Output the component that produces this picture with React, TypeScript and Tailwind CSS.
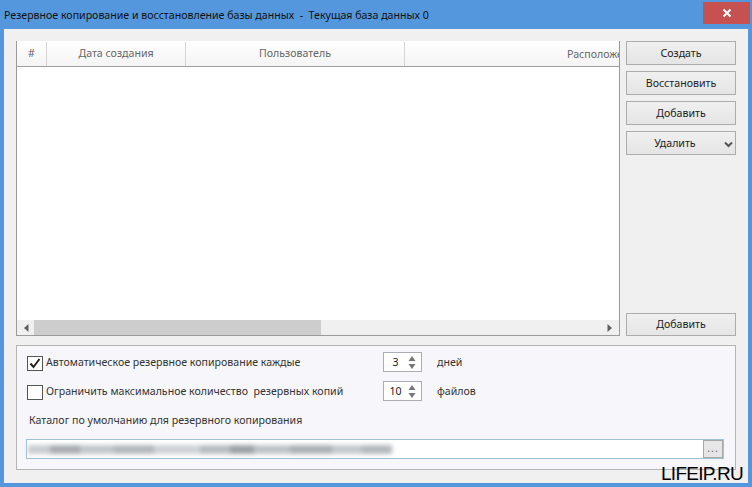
const font = { fontFamily: '"Noto Sans", sans-serif' };

function PushButton({ label, arrow, short }: { label: string; arrow?: boolean; short?: boolean }) {
  return (
    <button className={`relative w-[110px] border border-[#acacac] bg-gradient-to-b from-[#f0f0f0] to-[#e5e5e5] text-[10.6px] leading-none text-[#222] ${short ? 'h-[23px]' : 'h-[24px]'} ${arrow ? 'pr-[12px]' : ''}`}>
      {label}
      {arrow && (
        <svg className="absolute right-[2px] top-[9px]" width="9" height="7" viewBox="0 0 9 7">
          <path d="M1 1.5 L4.5 5 L8 1.5" fill="none" stroke="#555" strokeWidth="2" />
        </svg>
      )}
    </button>
  );
}

function Spinner({ value }: { value: string }) {
  return (
    <div className="flex h-[20px] w-[39px] items-center justify-between border border-[#abadb3] bg-white pl-[4px] pr-[5px] text-[10.6px] text-[#222]">
      <span className="w-[15px] text-center leading-none">{value}</span>
      <svg width="8" height="15" viewBox="0 0 8 15">
        <path d="M4 1 L7.5 6 L0.5 6 Z M0.5 9 L7.5 9 L4 14 Z" fill="#777" />
      </svg>
    </div>
  );
}

function OptionRow({ checked, label, value, unit }: { checked: boolean; label: string; value: string; unit: string }) {
  return (
    <div className="flex h-[20px] items-center">
      <div className="mt-[2px] flex h-[15px] w-[16px] items-center justify-center border border-[#555] bg-white">
        {checked && (
          <svg width="12" height="11" viewBox="0 0 12 11">
            <path d="M1.5 5.5 L4.5 9 L10.5 1" fill="none" stroke="#222" strokeWidth="2" />
          </svg>
        )}
      </div>
      <span className="ml-[3px] mt-[1px] w-[337px] whitespace-pre text-[10.6px] leading-none text-[#333]">{label}</span>
      <Spinner value={value} />
      <span className="ml-[15px] mt-[1px] text-[10.6px] leading-none text-[#333]">{unit}</span>
    </div>
  );
}

const columns = [
  { title: '#', width: 'w-[30px]' },
  { title: 'Дата создания', width: 'w-[139px]' },
  { title: 'Пользователь', width: 'w-[219px]' },
];

// smeared path text, widths and tones follow the blurred area of the screenshot
const smear = [
  { w: 'w-[22px]', bg: 'bg-[#c9ccd0]' },
  { w: 'w-[30px]', bg: 'bg-[#a9adb1]' },
  { w: 'w-[34px]', bg: 'bg-[#c4c7ca]' },
  { w: 'w-[40px]', bg: 'bg-[#b4b8bc]' },
  { w: 'w-[46px]', bg: 'bg-[#cfd2d5]' },
  { w: 'w-[30px]', bg: 'bg-[#b9bcc0]' },
  { w: 'w-[24px]', bg: 'bg-[#9ea2a6]' },
  { w: 'w-[36px]', bg: 'bg-[#c0c3c6]' },
  { w: 'w-[42px]', bg: 'bg-[#adb1b5]' },
  { w: 'w-[30px]', bg: 'bg-[#c6c9cc]' },
  { w: 'w-[30px]', bg: 'bg-[#b6b9bc]' },
];

export default function App() {
  return (
    <div className="relative flex h-[487px] w-[752px] flex-col overflow-hidden bg-[#5597dd] px-[4px] pb-[4px]" style={font}>
      <div className="flex h-[29px] shrink-0 items-start justify-between">
        <span className="mt-[9px] text-[10.6px] leading-[13px] whitespace-pre text-[#111]">
          Резервное копирование и восстановление базы данных  -  Текущая база данных 0
        </span>
        <div className="mr-[-2px] mt-[2px] flex h-[22px] w-[47px] items-center justify-center bg-[#c75050]">
          <svg width="10" height="10" viewBox="0 0 10 10">
            <path d="M1.5 1.5 L8.5 8.5 M8.5 1.5 L1.5 8.5" stroke="white" strokeWidth="2" />
          </svg>
        </div>
      </div>

      <div className="flex min-h-0 flex-1 flex-col bg-[#f0f0f0] pl-[12px] pr-[12px] pt-[12px]">
        <div className="flex h-[295px] shrink-0">
          <div className="flex w-[604px] flex-col border-b border-l border-r border-[#9a9a9a] bg-white">
            <div className="flex h-[26px] shrink-0 overflow-hidden border-b border-[#a0a0a0] bg-gradient-to-b from-white to-[#f4f4f4] pt-px text-[10.6px] text-[#666]">
              {columns.map((c) => (
                <div key={c.title} className={`flex shrink-0 items-center justify-center border-r border-[#d5d5d5] ${c.width}`}>
                  {c.title}
                </div>
              ))}
              <div className="flex-1 whitespace-nowrap pl-[162px] pt-[5px] leading-[15px]">Расположение</div>
            </div>
            <div className="flex-1" />
            <div className="flex h-[15px] shrink-0 items-center bg-[#f0f0f0]">
              <svg className="ml-[7px]" width="5" height="8" viewBox="0 0 5 8">
                <path d="M4.5 0 L4.5 8 L0 4 Z" fill="#606060" />
              </svg>
              <div className="ml-[5px] h-full w-[287px] bg-[#cdcdcd]" />
              <div className="flex-1" />
              <svg className="mr-[7px]" width="5" height="8" viewBox="0 0 5 8">
                <path d="M0.5 0 L0.5 8 L5 4 Z" fill="#606060" />
              </svg>
            </div>
          </div>
          <div className="ml-[6px] flex flex-col gap-[6px]">
            <PushButton label="Создать" />
            <PushButton label="Восстановить" />
            <PushButton label="Добавить" />
            <PushButton label="Удалить" arrow />
            <div className="mt-auto flex">
              <PushButton label="Добавить" short />
            </div>
          </div>
        </div>

        <div className="mt-[9px] h-[125px] border border-[#b4b4b4] bg-[#f7f7fb] pl-[10px] pr-[11px] pt-[6px]">
          <div className="flex flex-col gap-[9px]">
            <OptionRow checked label="Автоматическое резервное копирование каждые" value="3" unit="дней" />
            <OptionRow checked={false} label="Ограничить максимальное количество  резервных копий" value="10" unit="файлов" />
          </div>
          <div className="ml-[2px] mt-[12px] whitespace-pre text-[10.6px] leading-[15px] text-[#333]">
            Каталог по умолчанию для резервного копирования
          </div>
          <div className="-ml-px mt-[11px] flex h-[20px] w-[698px] items-center border border-[#9fc3d4] bg-white">
            <div className="ml-px flex h-[9px] w-[364px] blur-[2px]">
              {smear.map((s, i) => (
                <div key={i} className={`h-full ${s.w} ${s.bg}`} />
              ))}
            </div>
            <div className="ml-auto flex h-[18px] w-[20px] items-end justify-center border border-[#a8a8a8] bg-[#e6e6e6] pb-[3px] text-[10.6px] leading-none tracking-[1px] text-[#666]">
              ...
            </div>
          </div>
        </div>
      </div>

      <div className="absolute bottom-[3px] right-[9px] text-[19px] leading-[20px] tracking-[-0.7px] text-black" style={{ fontFamily: '"Liberation Sans", sans-serif' }}>
        LIFEIP.RU
      </div>
    </div>
  );
}
